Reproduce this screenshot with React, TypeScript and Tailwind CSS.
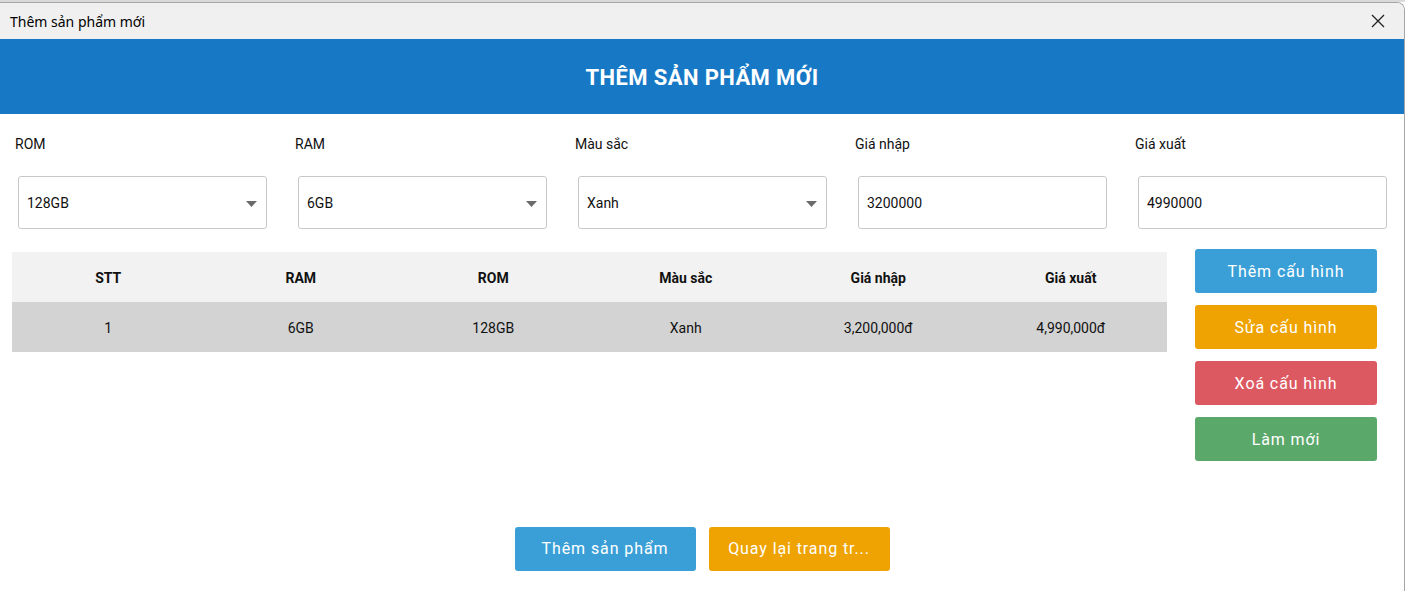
const fields = [
	{ label: 'ROM', value: '128GB', select: true },
	{ label: 'RAM', value: '6GB', select: true },
	{ label: 'Màu sắc', value: 'Xanh', select: true },
	{ label: 'Giá nhập', value: '3200000', select: false },
	{ label: 'Giá xuất', value: '4990000', select: false },
];

const columns = ['STT', 'RAM', 'ROM', 'Màu sắc', 'Giá nhập', 'Giá xuất'];
const rows = [['1', '6GB', '128GB', 'Xanh', '3,200,000đ', '4,990,000đ']];

const sideActions = [
	{ name: 'Thêm cấu hình', color: 'bg-[#3a9fd7]' },
	{ name: 'Sửa cấu hình', color: 'bg-[#eea302]' },
	{ name: 'Xoá cấu hình', color: 'bg-[#dc5962]' },
	{ name: 'Làm mới', color: 'bg-[#5ba86b]' },
];

export default function App() {
	return (
		<div className="w-[1405px] h-[591px] bg-white flex flex-col overflow-hidden font-['Roboto',sans-serif] text-[#111]">
			{/* window behind */}
			<div className="h-[2px] bg-[#d9d9d9]"></div>

			<div className="flex-1 flex flex-col border-t border-r border-[#a6a6a6] rounded-tr-[8px] overflow-hidden">
				<div className="h-[36px] bg-[#f0f0f0] flex items-center justify-between pl-[10px] pr-[19px] shrink-0">
					<span className="text-[14px] font-['Noto_Sans',sans-serif] text-black">
						Thêm sản phẩm mới
					</span>
					<svg width="14" height="14" viewBox="0 0 14 14" className="stroke-[#222]">
						<path d="M1 1L13 13M13 1L1 13" strokeWidth="1.3" />
					</svg>
				</div>

				<div className="h-[75px] bg-[#1779c5] flex items-center justify-center shrink-0">
					<h1 className="text-white font-bold text-[22px] tracking-[0.4px] pt-[1px]">
						THÊM SẢN PHẨM MỚI
					</h1>
				</div>

				<div className="flex pl-[15px] pt-[22px] shrink-0">
					{fields.map((field, index) => (
						<div key={index} className="w-[280px] shrink-0 flex flex-col">
							<label className="text-[14px] h-[16px] leading-[16px]">{field.label}</label>
							<div className="mt-[24px] ml-[3px] w-[249px] h-[53px] border border-[#c8c8c8] rounded-[3px] flex items-center justify-between pl-[8px] pr-[9px] pt-[2px] text-[14px]">
								<span>{field.value}</span>
								{field.select && (
									<svg width="11" height="6" viewBox="0 0 11 6">
										<path d="M0 0H11L5.5 6Z" fill="#6b6b6b" />
									</svg>
								)}
							</div>
						</div>
					))}
				</div>

				<div className="flex mt-[20px] shrink-0">
					<div className="ml-[12px] mt-[3px] w-[1155px] shrink-0">
						<div className="grid grid-cols-6 h-[50px] bg-[#f2f2f2] items-center text-center text-[14px] font-bold pt-[2px]">
							{columns.map((col) => (
								<div key={col}>{col}</div>
							))}
						</div>
						{rows.map((row, i) => (
							<div key={i} className="grid grid-cols-6 h-[50px] bg-[#d3d3d3] items-center text-center text-[14px] pt-[2px]">
								{row.map((cell, j) => (
									<div key={j}>{cell}</div>
								))}
							</div>
						))}
					</div>

					<div className="ml-[28px] flex flex-col gap-[12px]">
						{sideActions.map((action) => (
							<button
								key={action.name}
								className={`w-[182px] h-[44px] rounded-[3px] text-white text-[16px] tracking-[0.9px] pt-[1px] ${action.color}`}>
								{action.name}
							</button>
						))}
					</div>
				</div>

				<div className="flex-1 flex items-end justify-center gap-[13px] pb-[20px]">
					<button className="w-[181px] h-[44px] rounded-[3px] bg-[#3a9fd7] text-white text-[16px] tracking-[0.9px]">
						Thêm sản phẩm
					</button>
					<button className="w-[181px] h-[44px] rounded-[3px] bg-[#eea302] text-white text-[16px] tracking-[0.9px]">
						Quay lại trang tr...
					</button>
				</div>
			</div>
		</div>
	);
}
